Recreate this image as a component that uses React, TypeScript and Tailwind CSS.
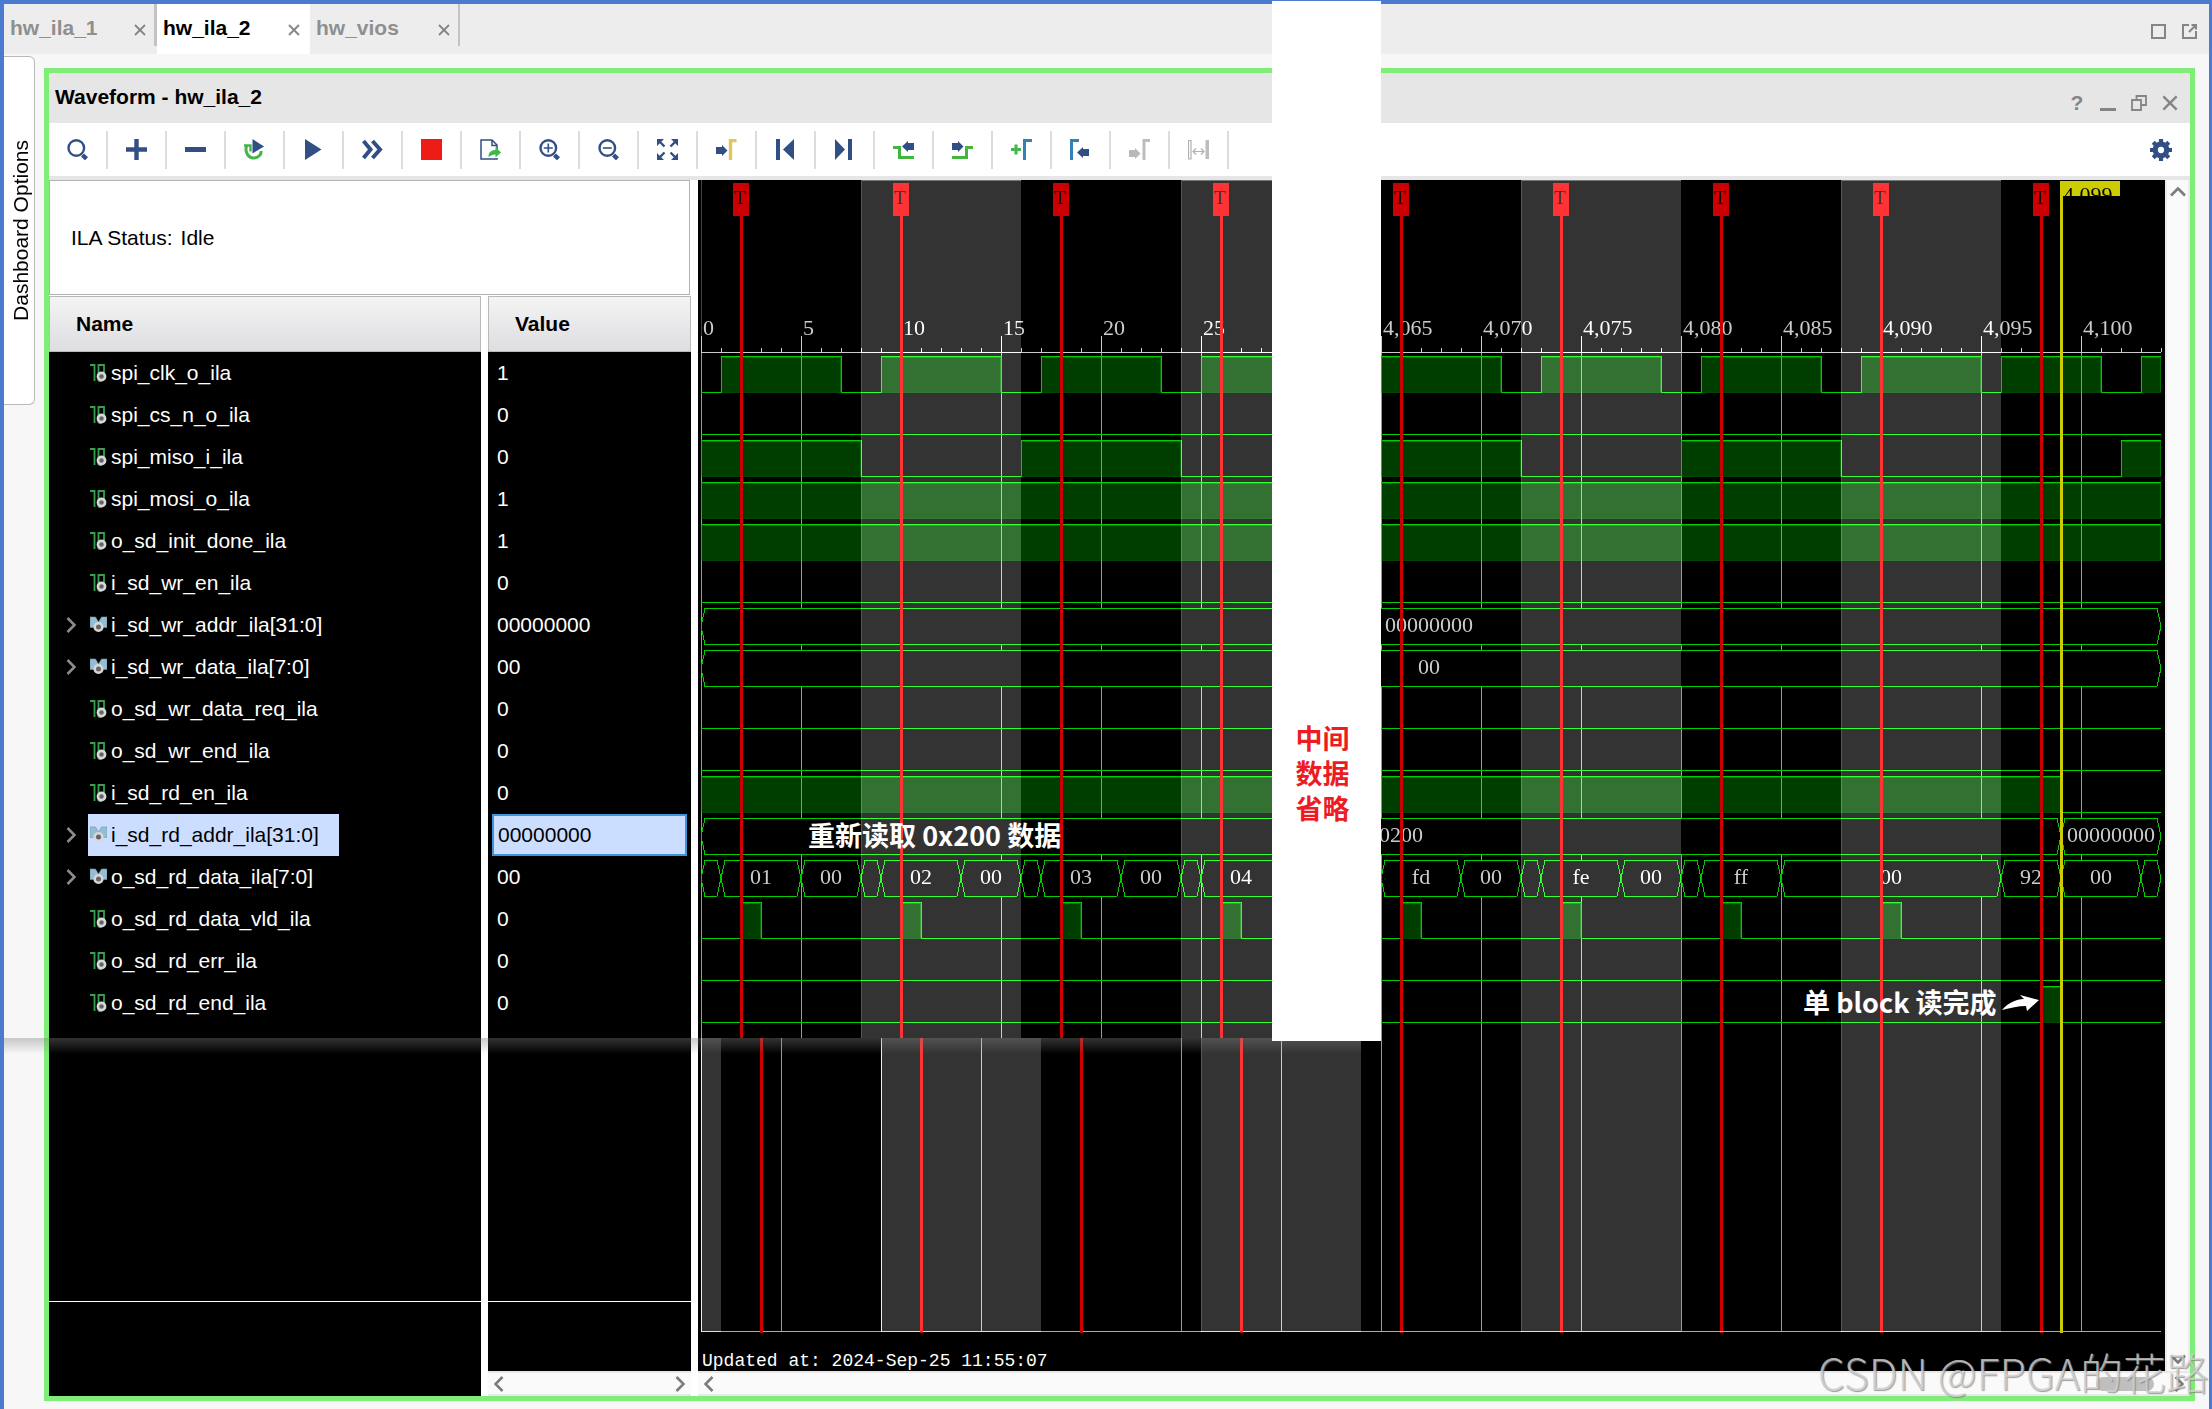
import type { ReactNode } from "react";

const NAVY = "#324f85";
const GREEN = "#00cc00";

/* ---------- signal data, in sample units from the left edge of the plot ---------- */

const SAMPLE = 20;
const LEFT = 3;
const ROW = 42;
const FIRST_ROW = 176;
const WAVE = 36;
const END = 73;
const CUT = 34;
const PLOT_BOTTOM = 1151;
const STRIP_TOP = 858;

type Cell = { from: number; to: number; text?: string; at?: number };

type Signal = {
  name: string;
  value: string;
  high?: number[][];
  cells?: Cell[];
  selected?: boolean;
};

const signals: Signal[] = [
  {
    name: "spi_clk_o_ila",
    value: "1",
    high: [[1, 7], [9, 15], [17, 23], [25, 31], [34, 40], [42, 48], [50, 56], [58, 64], [65, 70], [72, 73]],
  },
  { name: "spi_cs_n_o_ila", value: "0", high: [] },
  { name: "spi_miso_i_ila", value: "0", high: [[0, 8], [16, 24], [34, 41], [49, 57], [71, 73]] },
  { name: "spi_mosi_o_ila", value: "1", high: [[0, 73]] },
  { name: "o_sd_init_done_ila", value: "1", high: [[0, 73]] },
  { name: "i_sd_wr_en_ila", value: "0", high: [] },
  { name: "i_sd_wr_addr_ila[31:0]", value: "00000000", cells: [{ from: 0, to: 73, text: "00000000", at: 731 }] },
  { name: "i_sd_wr_data_ila[7:0]", value: "00", cells: [{ from: 0, to: 73, text: "00", at: 731 }] },
  { name: "o_sd_wr_data_req_ila", value: "0", high: [] },
  { name: "o_sd_wr_end_ila", value: "0", high: [] },
  { name: "i_sd_rd_en_ila", value: "0", high: [[0, 68]] },
  {
    name: "i_sd_rd_addr_ila[31:0]",
    value: "00000000",
    selected: true,
    cells: [
      { from: 0, to: 68, text: "0200", at: 703 },
      { from: 68, to: 73, text: "00000000" },
    ],
  },
  {
    name: "o_sd_rd_data_ila[7:0]",
    value: "00",
    cells: [
      { from: 0, to: 1 },
      { from: 1, to: 5, text: "01" },
      { from: 5, to: 8, text: "00" },
      { from: 8, to: 9 },
      { from: 9, to: 13, text: "02" },
      { from: 13, to: 16, text: "00" },
      { from: 16, to: 17 },
      { from: 17, to: 21, text: "03" },
      { from: 21, to: 24, text: "00" },
      { from: 24, to: 25 },
      { from: 25, to: 29, text: "04" },
      { from: 34, to: 38, text: "fd" },
      { from: 38, to: 41, text: "00" },
      { from: 41, to: 42 },
      { from: 42, to: 46, text: "fe" },
      { from: 46, to: 49, text: "00" },
      { from: 49, to: 50 },
      { from: 50, to: 54, text: "ff" },
      { from: 54, to: 65, text: "00" },
      { from: 65, to: 68, text: "92" },
      { from: 68, to: 72, text: "00" },
      { from: 72, to: 73 },
    ],
  },
  {
    name: "o_sd_rd_data_vld_ila",
    value: "0",
    high: [[2, 3], [10, 11], [18, 19], [26, 27], [35, 36], [43, 44], [51, 52], [59, 60]],
  },
  { name: "o_sd_rd_err_ila", value: "0", high: [] },
  { name: "o_sd_rd_end_ila", value: "0", high: [[67, 68]] },
];

const triggers = [2, 10, 18, 26, 35, 43, 51, 59, 67];
const bands = [[8, 16], [24, 32], [41, 49], [57, 65]];
const majors = [0, 5, 10, 15, 20, 25, 34, 39, 44, 49, 54, 59, 64, 69];

const px = (sample: number) => LEFT + sample * SAMPLE;

const label = (sample: number) =>
  sample < CUT ? String(sample) : (sample - CUT + 4065).toLocaleString("en-US");

/* ---------- icons ---------- */

const Icon = ({ children, className = "size-[21px]" }: { children: ReactNode; className?: string }) => (
  <svg viewBox="0 0 21 21" className={className} fill="none" aria-hidden="true">
    {children}
  </svg>
);

const ArrowRight = ({ x, y, fill = NAVY }: { x: number; y: number; fill?: string }) => (
  <path d={`M${x} ${y + 2}h6v-2l5.500 5.500l-5.500 5.500v-2h-6z`} fill={fill} />
);

const ArrowLeft = ({ x, y }: { x: number; y: number }) => (
  <path d={`M${x + 12} ${y + 2}h-6v-2l-6 5.500l6 5.500v-2h6z`} fill={NAVY} />
);

const Lens = ({ children }: { children?: ReactNode }) => (
  <Icon>
    <circle cx="9.300" cy="9" r="7.800" stroke={NAVY} strokeWidth="2.400" />
    <path d="M15.500 16l4 3.800" stroke={NAVY} strokeWidth="4.400" />
    {children}
  </Icon>
);

const tools: { title: string; icon: ReactNode; disabled?: boolean }[] = [
  { title: "Search", icon: <Lens /> },
  { title: "Add", icon: <Icon><path d="M10.500 0v21M0 10.500h21" stroke={NAVY} strokeWidth="4.400" /></Icon> },
  { title: "Remove", icon: <Icon><path d="M0 10.500h21" stroke={NAVY} strokeWidth="5" /></Icon> },
  {
    title: "Run trigger",
    icon: (
      <Icon>
        <path d="M3 6c-3 7 1.500 13 6.500 13s8-3.500 7.500-7" stroke="#43b649" strokeWidth="3" />
        <path d="M0 6.500h6.500v6" stroke="#43b649" strokeWidth="2.400" />
        <path d="M8.500 0l11.500 7.500l-11.500 7z" fill={NAVY} />
      </Icon>
    ),
  },
  { title: "Run immediate", icon: <Icon><path d="M2 0l16.500 10.500l-16.500 10.500z" fill={NAVY} /></Icon> },
  {
    title: "Auto re-trigger",
    icon: <Icon><path d="M1.500 2l7 8.500l-7 8.500M10.500 2l7.500 8.500l-7.500 8.500" stroke={NAVY} strokeWidth="4" /></Icon>,
  },
  { title: "Stop", icon: <Icon><path d="M0 0h21v21h-21z" fill="#ed1c16" /></Icon> },
  {
    title: "Export",
    icon: (
      <Icon>
        <path d="M17 12v-6l-5-5h-11v19h16v-1M12 1v5.500h5" stroke={NAVY} strokeWidth="1.500" />
        <path d="M8.500 18c0-5 3-7 7-7v-3l5.500 5.500l-5.500 5v-3c-3 0-4.500 1-7 2.500z" fill="#43b649" />
      </Icon>
    ),
  },
  { title: "Zoom in", icon: <Lens><path d="M9.300 4.500v9M4.800 9h9" stroke={NAVY} strokeWidth="1.600" /></Lens> },
  { title: "Zoom out", icon: <Lens><path d="M4.800 9h9" stroke={NAVY} strokeWidth="1.600" /></Lens> },
  {
    title: "Zoom fit",
    icon: (
      <Icon>
        <path d="M1.500 1.500l6 6M19.500 1.500l-6 6M1.500 19.500l6-6M19.500 19.500l-6-6" stroke={NAVY} strokeWidth="2.400" />
        <path d="M0 0h7l-7 7zM21 0h-7l7 7zM0 21h7l-7-7zM21 21h-7l7-7z" fill={NAVY} />
      </Icon>
    ),
  },
  {
    title: "Go to cursor",
    icon: (
      <Icon>
        <ArrowRight x={0} y={6} />
        <path d="M14.500 21v-19.500h6" stroke="#e2c55f" strokeWidth="3.400" />
      </Icon>
    ),
  },
  { title: "Go to start", icon: <Icon><path d="M1 0h4v21h-4zM19 0v21l-11-10.500z" fill={NAVY} /></Icon> },
  { title: "Go to end", icon: <Icon><path d="M14 0h4v21h-4zM1 0v21l10-10.500z" fill={NAVY} /></Icon> },
  {
    title: "Previous transition",
    icon: <Icon><path d="M0 8.500h6.500v10h14.500" stroke="#43b63d" strokeWidth="3" /><ArrowLeft x={9} y={2} /></Icon>,
  },
  {
    title: "Next transition",
    icon: <Icon><path d="M0 18.500h14.500v-10h6.500" stroke="#43b63d" strokeWidth="3" /><ArrowRight x={0} y={2} /></Icon>,
  },
  {
    title: "Add marker",
    icon: (
      <Icon>
        <path d="M5 5.500v10M0 10.500h10" stroke="#43b649" strokeWidth="3" />
        <path d="M13.500 21v-19.500h7.500" stroke="#3580b4" strokeWidth="3" />
      </Icon>
    ),
  },
  {
    title: "Previous marker",
    icon: <Icon><path d="M1.500 21v-19.500h7.500" stroke="#3580b4" strokeWidth="3" /><ArrowLeft x={7} y={8} /></Icon>,
  },
  {
    title: "Next marker",
    disabled: true,
    icon: (
      <Icon>
        <ArrowRight x={0} y={9} fill="#b9b9b9" />
        <path d="M15 21v-19.500h6" stroke="#bdbdbd" strokeWidth="3" />
      </Icon>
    ),
  },
  {
    title: "Swap cursors",
    disabled: true,
    icon: (
      <Icon>
        <path d="M.500 1.500h2.500v18.500h-2.500zM5 12.500h11M8 9.500l-3 3l3 3M13 9.500l3 3l-3 3" stroke="#b0b0b0" strokeWidth="1.200" />
        <path d="M17.500 1h3.500v19h-3.500z" fill="#bdbdbd" />
      </Icon>
    ),
  },
];

const ScalarIcon = () => (
  <svg viewBox="0 0 17 18" className="h-[18px] w-[17px] shrink-0" fill="none" aria-hidden="true">
    <path d="M0 1h4.500v16M8.500 17v-16h5.500v14M8.500 17h3" stroke="#37a04e" strokeWidth="1.800" />
    <circle cx="11.500" cy="12.500" r="3.600" fill="#666" stroke="#d8d8d8" strokeWidth="2.600" />
  </svg>
);

const BusIcon = () => (
  <svg viewBox="0 0 17 18" className="h-[18px] w-[17px] shrink-0" fill="none" aria-hidden="true">
    <path d="M0 1h5.500l3 5l3-5h5.500v10.500h-3.500l-5-4l-5 4h-3.500z" fill="#93bfd6" stroke="#6f95a8" strokeWidth=".600" />
    <circle cx="8.500" cy="11" r="3.800" fill="#666" stroke="#d8d8d8" strokeWidth="2.600" />
  </svg>
);

const Close = ({ className = "size-3" }: { className?: string }) => (
  <svg viewBox="0 0 12 12" className={className} aria-hidden="true">
    <path d="M1 1l10 10M11 1l-10 10" stroke="#858585" strokeWidth="1.800" />
  </svg>
);

const Chevron = ({ className = "" }: { className?: string }) => (
  <svg viewBox="0 0 10 16" className={`h-4 w-[10px] ${className}`} fill="none" aria-hidden="true">
    <path d="M1.500 1l7 7l-7 7" stroke="currentColor" strokeWidth="2.600" />
  </svg>
);

/* ---------- waveform drawing ---------- */

const Digital = ({ high, top }: { high: number[][]; top: number }) => {
  const hi = top + 0.5;
  const lo = top + WAVE + 0.5;
  let d = `M${LEFT} ${lo}`;
  high.forEach(([from, to]) => {
    d += `H${px(from)}V${hi}H${px(to)}`;
    if (to < END) d += `V${lo}`;
  });
  if (!high.length || high[high.length - 1][1] < END) d += `H${px(END)}`;

  return (
    <g>
      {high.map(([from, to]) => (
        <g key={from}>
          <rect x={px(from)} y={top} width={px(to) - px(from)} height={WAVE} fill={GREEN} fillOpacity={0.3} />
          <rect
            x={px(from) + 0.5}
            y={top + 1.5}
            width={px(to) - px(from) - 1}
            height={WAVE - 1}
            fill="none"
            stroke={GREEN}
            strokeOpacity={0.35}
          />
        </g>
      ))}
      <path d={d} fill="none" stroke={GREEN} />
    </g>
  );
};

const Bus = ({ cells, top }: { cells: Cell[]; top: number }) => (
  <g>
    {cells.map(({ from, to, text, at }) => {
      const a = px(from);
      const b = px(to);
      const hi = top + 0.5;
      const lo = top + WAVE + 0.5;
      const mid = top + WAVE / 2;
      return (
        <g key={from}>
          <path
            d={`M${a} ${mid}L${a + 4} ${hi}H${b - 4}L${b} ${mid}L${b - 4} ${lo}H${a + 4}Z`}
            fill="#000"
            stroke={GREEN}
          />
          {text && (
            <text x={at ?? (a + b) / 2} y={top + 24} textAnchor="middle" fontSize={22} fill="#ccc">
              {text}
            </text>
          )}
        </g>
      );
    })}
  </g>
);

const Ruler = () => (
  <g>
    {Array.from({ length: END + 1 }, (_, s) => (
      <rect key={s} x={px(s)} y={168} width={1} height={4} fill="#ccc" />
    ))}
    {majors.map((s) => (
      <g key={s}>
        <rect x={px(s)} y={156} width={1} height={16} fill="#ccc" />
        <text x={px(s) + 2} y={155} fontSize={22} fill="#ccc">
          {label(s)}
        </text>
      </g>
    ))}
    <rect x={LEFT} y={172} width={END * SAMPLE} height={1} fill="#ccc" />
  </g>
);

const Band = ({ from, to, y, bottom }: { from: number; to: number; y: number; bottom: number }) => (
  <g className="mix-blend-plus-lighter">
    <rect x={px(from)} y={y} width={px(to) - px(from)} height={bottom - y} fill="#333" />
    {y === 0 && <rect x={px(from)} y={0} width={px(to) - px(from)} height={1} fill="#777" />}
    <rect x={px(from)} y={y} width={1} height={bottom - y} fill="#555" />
  </g>
);

const Waveform = () => (
  <svg
    width={1467}
    height={1191}
    viewBox="0 0 1467 1191"
    className="block shrink-0 font-['Liberation_Serif',serif]"
    shapeRendering="crispEdges"
    role="img"
    aria-label="Captured waveform"
  >
    <g className="isolate">
      <rect width={1467} height={1191} fill="#000" />
      <rect x={LEFT} y={0} width={1} height={STRIP_TOP} fill="#444" />
      {majors.map((s) => (
        <rect key={s} x={px(s)} y={172} width={1} height={(s < CUT ? STRIP_TOP : PLOT_BOTTOM) - 172} fill="#999" />
      ))}
      <Ruler />
      {signals.map(({ name, high, cells }, i) => {
        const top = FIRST_ROW + i * ROW;
        return cells ? <Bus key={name} cells={cells} top={top} /> : <Digital key={name} high={high ?? []} top={top} />;
      })}

      {/* Trigger flags */}
      {triggers.map((s) => (
        <g key={s}>
          <rect x={px(s) - 8} y={3} width={16} height={33} fill="#c00" />
          <rect x={px(s) - 1} y={36} width={3} height={(s < CUT ? STRIP_TOP : 1153) - 36} fill="#c00" />
          <text x={px(s) - 1} y={24} textAnchor="middle" fontSize={19} fill="#000">
            T
          </text>
        </g>
      ))}

      {/* Main cursor */}
      <clipPath id="cursor-label">
        <rect x={px(68) - 1} y={1} width={60} height={15} />
      </clipPath>
      <rect x={px(68) - 1} y={1} width={60} height={15} fill="#cc0" />
      <rect x={px(68) - 1} y={16} width={3} height={1137} fill="#cc0" />
      <text x={px(68) + 2} y={22} fontSize={22} fill="#000" clipPath="url(#cursor-label)">
        4,099
      </text>

      {/* Shifted capture visible under the left part */}
      <rect y={STRIP_TOP} width={px(CUT)} height={PLOT_BOTTOM - STRIP_TOP} fill="#000" />
      {[0, 4, 9, 14, 24, 29].map((s) => (
        <rect key={s} x={px(s)} y={STRIP_TOP} width={1} height={PLOT_BOTTOM - STRIP_TOP} fill="#999" />
      ))}
      <rect x={LEFT} y={PLOT_BOTTOM} width={END * SAMPLE} height={1} fill="#aaa" />
      {[3, 11, 19, 27].map((s) => (
        <rect key={s} x={px(s) - 1} y={STRIP_TOP} width={3} height={295} fill="#c00" />
      ))}

      {bands.map(([from, to]) => (
        <Band key={from} from={from} to={from === 24 ? CUT : to} y={0} bottom={from < CUT ? STRIP_TOP : PLOT_BOTTOM + 1} />
      ))}
      {[[0, 1], [9, 17], [25, 33]].map(([from, to]) => (
        <Band key={from} from={from} to={to} y={STRIP_TOP} bottom={PLOT_BOTTOM + 1} />
      ))}
    </g>

    <g fill="#fff" className="font-['Noto_Sans_CJK_SC',sans-serif] font-bold">
      <text x={110} y={666} fontSize={27}>重新读取 0x200 数据</text>
      <text x={1105} y={833} fontSize={27}>单 block 读完成</text>
    </g>
    <path
      d="M1304 830C1310 823 1318 819 1326 819L1322 815L1341 820L1329 831L1328 826C1320 826 1313 828 1304 830Z"
      fill="#fff"
      shapeRendering="auto"
    />
    <text x={4} y={1186} fontSize={18} fill="#fff" className="font-['Liberation_Mono',monospace]">
      Updated at: 2024-Sep-25 11:55:07
    </text>
  </svg>
);

/* ---------- panels ---------- */

const TabBar = () => (
  <nav className="flex h-[50px] items-start bg-[#ededed] font-bold text-[#8f8f8f]">
    <div className="flex h-[42px] w-[153px] items-center justify-between border-r-[3px] border-[#c3c3c3] pl-1.5 pr-2 pt-1.5">
      <button>hw_ila_1</button>
      <button aria-label="Close hw_ila_1" className="pt-1"><Close /></button>
    </div>
    <div className="flex h-[50px] w-[153px] items-center justify-between bg-white pb-0.5 pl-1.5 pr-[10px] text-black">
      <button>hw_ila_2</button>
      <button aria-label="Close hw_ila_2" className="pt-1"><Close /></button>
    </div>
    <div className="flex h-[42px] w-[150px] items-center justify-between border-r-2 border-[#c3c3c3] pl-1.5 pr-2 pt-1.5">
      <button>hw_vios</button>
      <button aria-label="Close hw_vios" className="pt-1"><Close /></button>
    </div>
    <div className="ml-auto flex gap-4 pr-3 pt-5">
      <button aria-label="Maximize" className="size-[15px] border-2 border-[#858585]" />
      <button aria-label="Float">
        <svg viewBox="0 0 15 15" className="size-[15px]" fill="none" stroke="#858585" strokeWidth="2">
          <path d="M7 1h-6v13h13v-7M7 8l6-6M9.500 1h4.500v4.500" />
        </svg>
      </button>
    </div>
  </nav>
);

const PanelHeader = () => (
  <header className="flex h-[50px] items-center justify-between bg-[#e6e6e6] pl-1.5 pr-3">
    <h1 className="pb-0.5 font-bold">Waveform - hw_ila_2</h1>
    <div className="flex items-center gap-[15px] pt-2.5 text-[#858585]">
      <button className="w-4 text-center font-bold leading-4">?</button>
      <button aria-label="Minimize" className="h-4 w-4 border-b-[3px] border-[#858585]" />
      <button aria-label="Restore">
        <svg viewBox="0 0 16 16" className="size-4" fill="none" stroke="#858585" strokeWidth="1.800">
          <path d="M1 5h9v10h-9zM5.500 5v-4h9.500v9h-5" />
        </svg>
      </button>
      <button aria-label="Close"><Close className="size-4" /></button>
    </div>
  </header>
);

const Toolbar = () => (
  <div className="flex h-[57px] items-center border-b-4 border-[#e6e6e6] bg-white">
    {tools.map(({ title, icon, disabled }) => (
      <button
        key={title}
        aria-label={title}
        disabled={disabled}
        className="flex h-[38px] w-[59px] items-center justify-center border-r-2 border-[#dcdcdc]"
      >
        {icon}
      </button>
    ))}
    <button aria-label="Settings" className="ml-auto mr-[18px]">
      <Icon className="size-[22px]">
        <circle cx="10.500" cy="10.500" r="5.500" stroke={NAVY} strokeWidth="5" />
        <path
          d="M10.500 0v4M10.500 17v4M0 10.500h4M17 10.500h4M3.100 3.100l2.800 2.800M15.100 15.100l2.800 2.800M3.100 17.900l2.800-2.800M15.100 5.900l2.800-2.800"
          stroke={NAVY}
          strokeWidth="4"
        />
      </Icon>
    </button>
  </div>
);

const headCell = "flex h-14 items-center border border-[#b9b9b9] bg-linear-to-b from-[#f4f4f4] to-[#dedee2] font-bold";

const SignalTable = () => (
  <table className="w-[642px] table-fixed border-collapse text-left text-white">
    <thead className="text-black">
      <tr>
        <th className="w-[439px] p-0 pr-[7px]"><div className={`${headCell} pl-[26px]`}>Name</div></th>
        <th className="p-0"><div className={`${headCell} pl-[26px]`}>Value</div></th>
      </tr>
    </thead>
    <tbody>
      {signals.map(({ name, value, cells, selected }) => (
        <tr key={name} className="h-[42px]">
          <td className="p-0 pr-[7px]">
            <div className="flex h-[42px] items-center bg-black">
              <span className="flex w-[39px] pl-[17px] text-[#8c8c8c]">
                {cells && <button aria-label={`Expand ${name}`} className="flex"><Chevron /></button>}
              </span>
              <span
                className={
                  selected
                    ? "flex h-full items-center gap-1 bg-[#ccdeff] pl-0.5 pr-5 text-black"
                    : "flex h-full items-center gap-1 pl-0.5"
                }
              >
                {cells ? <BusIcon /> : <ScalarIcon />}
                {name}
              </span>
            </div>
          </td>
          <td className="bg-black px-1 py-0">
            <div
              className={
                selected
                  ? "flex h-[42px] items-center border-2 border-[#3f94d8] bg-[#ccdeff] pl-1 text-black"
                  : "flex h-[42px] items-center pl-[5px]"
              }
            >
              {value}
            </div>
          </td>
        </tr>
      ))}
    </tbody>
  </table>
);

const SignalPane = () => (
  <section className="flex w-[642px] shrink-0 flex-col">
    <div className="mb-px mr-px flex h-[115px] items-center gap-2 border border-[#b3b3b3] bg-white pl-[21px]">
      <span>ILA Status:</span>
      <span>Idle</span>
    </div>
    <SignalTable />
    <div className="flex flex-1">
      <div className="mr-[7px] w-[432px] bg-black pt-[277px]">
        <hr className="border-white" />
      </div>
      <div className="flex flex-1 flex-col">
        <div className="flex-1 bg-black pt-[277px]">
          <hr className="border-white" />
        </div>
        <div className="flex h-[25px] items-center justify-between border-y-2 border-[#e8e8e8] bg-[#fafafa] px-1.5 text-[#7b7b7b]">
          <Chevron className="rotate-180" />
          <Chevron />
        </div>
      </div>
    </div>
  </section>
);

const WavePane = () => (
  <section className="ml-[7px] flex min-w-0 flex-1 flex-col text-[#7b7b7b]">
    <div className="flex">
      <div className="min-w-0 flex-1 overflow-hidden bg-black">
        <Waveform />
      </div>
      <div className="flex w-[25px] flex-col items-center justify-between border-x-2 border-[#ececec] bg-[#fafafa] py-1">
        <Chevron className="-rotate-90" />
        <Chevron className="rotate-90" />
      </div>
    </div>
    <div className="flex h-[25px] items-center border-y-2 border-[#e8e8e8] bg-[#fafafa] px-1.5">
      <Chevron className="rotate-180" />
      <div className="ml-auto mr-5 h-[14px] w-[58px] rounded-full bg-[#bfbfbf]" />
      <Chevron />
    </div>
  </section>
);

export default function App() {
  return (
    <div className="relative border-l-4 border-r-3 border-t-4 border-[#4a7bd0] bg-[#f7f7f7] font-['Liberation_Sans',Arial,sans-serif] text-[21px] leading-6 text-black">
      <TabBar />
      <div className="flex pb-2">
        <aside className="w-10 shrink-0 pt-0.5">
          <button className="flex h-[349px] w-[31px] items-center justify-center rounded-r-md border border-l-0 border-[#b9b9b9] bg-white pl-1">
            <span className="rotate-180 whitespace-nowrap [writing-mode:vertical-rl]">Dashboard Options</span>
          </button>
        </aside>
        <main className="mr-3.5 mt-3.5 min-w-0 flex-1 border-[5px] border-[#80ed78] bg-white">
          <PanelHeader />
          <Toolbar />
          <div className="flex">
            <SignalPane />
            <WavePane />
          </div>
        </main>
      </div>

      {/* Edge of the capture pasted on top */}
      <div className="absolute left-0 top-[1034px] h-4 w-[1357px] bg-linear-to-b from-[#80808066] to-transparent" />

      <div className="absolute -top-[3px] left-[1268px] flex h-[1040px] w-[109px] items-center justify-center bg-white pr-2 pt-[502px] text-center font-['Noto_Sans_CJK_SC',sans-serif] text-[27px] font-bold leading-[35px] text-[#ed1c24]">
        <p>中间<br />数据<br />省略</p>
      </div>

      <p className="absolute bottom-2 right-0 whitespace-nowrap font-['Noto_Sans_CJK_SC',sans-serif] text-[43px] font-light leading-[60px] text-[#d4d4d4cc] [text-shadow:1px_1px_1px_#777777b3]">
        CSDN @FPGA的花路
      </p>
    </div>
  );
}
